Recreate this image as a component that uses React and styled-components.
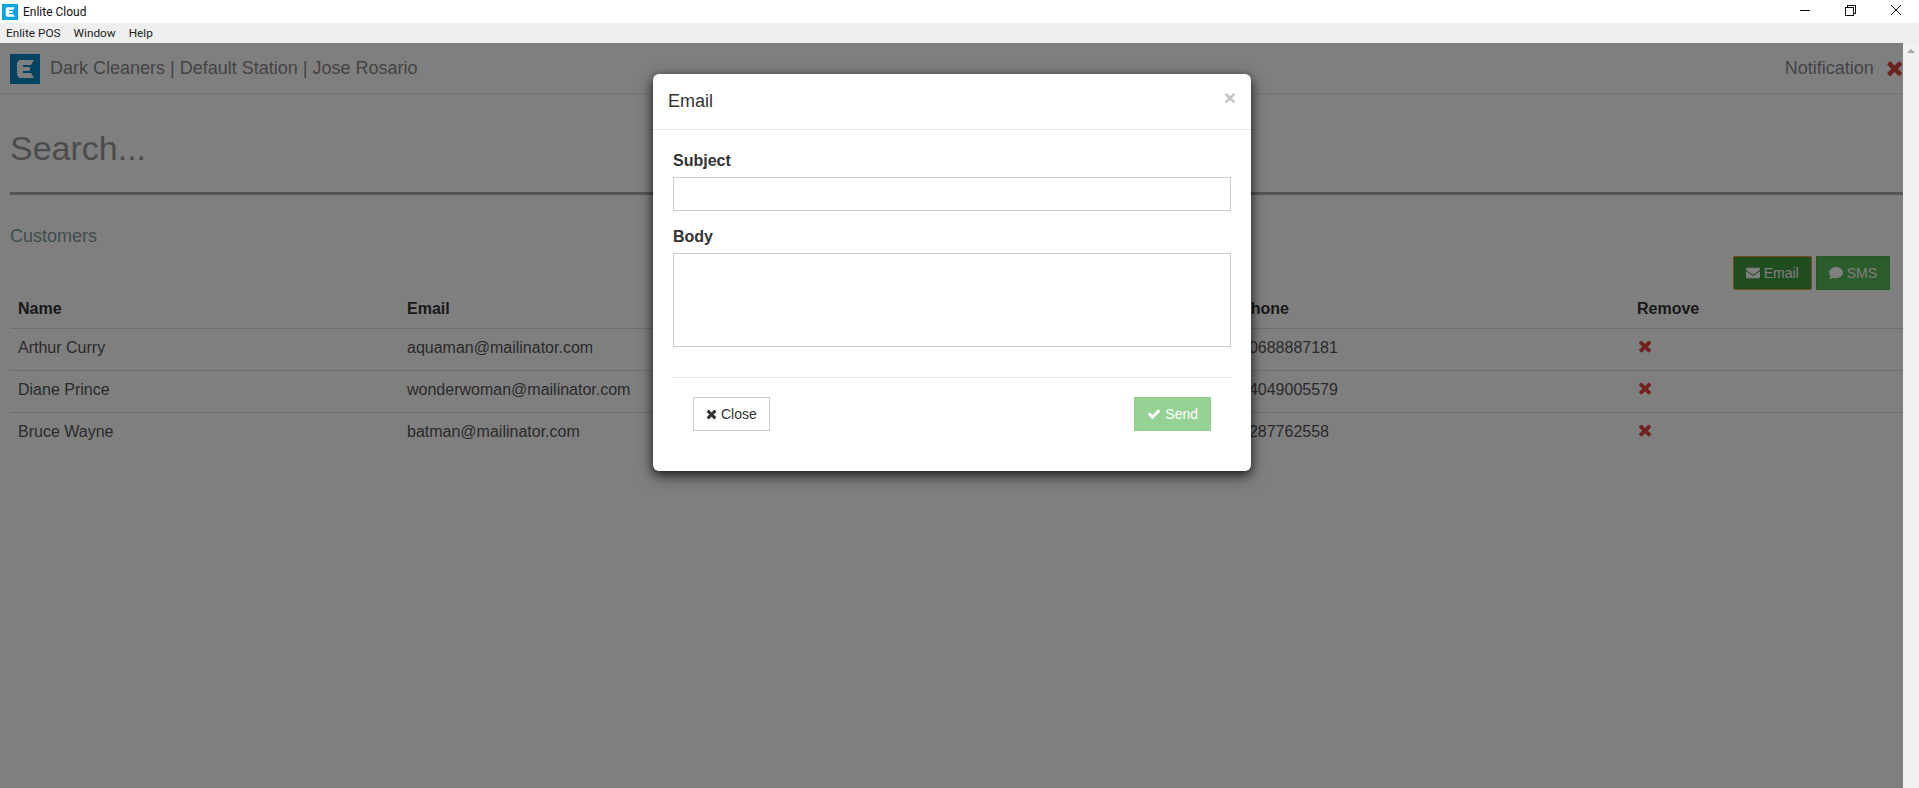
import React from "react";
import styled, { createGlobalStyle } from "styled-components";
import { FaEnvelope, FaComment } from "react-icons/fa";

const Global = createGlobalStyle`
  html, body { margin: 0; padding: 0; height: 100%; overflow: hidden; background: #fff; }
  * { box-sizing: border-box; }
  body { font-family: "Liberation Sans", Arial, sans-serif; color: #333; }
`;
const Win = styled.div`display: flex; flex-direction: column; width: 1919px; height: 788px; overflow: hidden;`;
const TitleBar = styled.div`
  height: 23px; flex: none; display: flex; align-items: center; background: #fff; padding-left: 2px;
  font-family: "Roboto", sans-serif; font-size: 12px; color: #111;
`;
const AppIcon = styled.svg`width: 16px; height: 16px; margin-right: 5px; flex: none;`;
const Controls = styled.div`margin-left: auto; display: flex; align-items: center; height: 23px; padding: 0 15px 4px 0; gap: 29px;`;
const ControlIcon = styled.svg`width: 16px; height: 16px; flex: none; display: block; fill: none; stroke: #111; stroke-width: 1; shape-rendering: ${p => (p.$smooth ? "auto" : "crispEdges")};`;
const CloseControl = styled(ControlIcon)`margin-left: 1px;`;
const MenuBar = styled.div`
  height: 20px; flex: none; display: flex; align-items: center; background: #efefef; padding-left: 6px; gap: 13px;
  font-family: "Roboto", sans-serif; font-size: 11.8px; color: #222;
`;
const Main = styled.div`flex: 1; display: flex; min-height: 0;`;
const Content = styled.div`position: relative; flex: 1; min-width: 0; overflow: hidden; background: #fff;`;
const Scrollbar = styled.div`width: 16px; flex: none; background: #f1f1f1; display: flex; justify-content: center; padding-top: 6px;`;
const ArrowUp = styled.div`width: 0; height: 0; border-left: 4px solid transparent; border-right: 4px solid transparent; border-bottom: 4px solid #a3a3a3;`;
const Header = styled.header`
  height: 51px; display: flex; align-items: center; border-bottom: 1px solid #e7e7e7; padding-left: 10px;
  font-size: 18px; color: #888; white-space: nowrap;
`;
const Logo = styled.svg`width: 30px; height: 30px; margin-right: 10px; flex: none; margin-top: 2px;`;
const Notification = styled.div`margin-left: auto; display: flex; align-items: center; gap: 12px;`;
const Glyph = styled.svg`display: block; flex: none; height: ${p => p.$size}px; width: auto; fill: currentColor; color: ${p => p.$color || "inherit"};`;
const SearchInput = styled.input`
  display: block; width: calc(100% - 10px); margin-left: 10px; height: 101px; padding: 34px 0 24px; border: 0; border-bottom: 3px solid #aaa;
  font: 34px/40px "Liberation Sans", Arial, sans-serif; outline: none; background: transparent;
  &::placeholder { color: #999; opacity: 1; }
`;
const SectionTitle = styled.h2`margin: 30px 0 0 10px; font-size: 18px; line-height: 22px; font-weight: 400; color: #7f9a9a;`;
const Actions = styled.div`display: flex; justify-content: flex-end; gap: 4px; padding-right: 13px; margin-top: 9px;`;
const ActionButton = styled.button`
  height: 34px; padding: 0 12px; display: inline-flex; align-items: center; gap: 4px; font: 14px "Liberation Sans", Arial, sans-serif; color: #fff;
  background: ${p => (p.$active ? "#3f9a3f" : "#56b856")};
  border: 1px solid ${p => (p.$active ? "#e09a2c" : "#50ac50")};
  border-radius: ${p => (p.$active ? "2px" : "0")};
`;
const Table = styled.table`width: calc(100% - 10px); margin-left: 10px; border-collapse: collapse; table-layout: fixed; font-size: 16px;`;
const Col = styled.col`width: ${p => p.$w}px;`;
const Th = styled.th`height: 38px; padding: 0 8px; text-align: left; font-weight: 700; border-bottom: 1px solid #ddd; color: #333;`;
const Td = styled.td`height: 42px; padding: 0 8px 3px; color: #555; border-bottom: 1px solid #ddd; white-space: nowrap;`;
const RemoveCell = styled(Td)`padding: 0 8px 7px 9px;`;
const Row = styled.tr`&:last-child td { border-bottom: 0; }`;
const Backdrop = styled.div`position: absolute; inset: 0; background: rgba(0,0,0,.5);`;
const Modal = styled.div`
  position: absolute; left: 653px; top: 31px; width: 598px; height: 397px; background: #fff; border-radius: 6px;
  box-shadow: 0 3px 9px rgba(0,0,0,.5), 0 5px 15px rgba(0,0,0,.5); display: flex; flex-direction: column;
`;
const ModalHeader = styled.div`height: 56px; flex: none; border-bottom: 1px solid #e5e5e5; display: flex; align-items: center; padding: 0 15px; position: relative;`;
const ModalTitle = styled.h3`margin: 0; font-size: 18px; font-weight: 400; color: #333;`;
const Dismiss = styled.span`position: absolute; right: 15px; top: 13px; font-size: 21px; line-height: 1; font-weight: 700; color: #c4c4c4;`;
const ModalBody = styled.div`padding: 20px 20px 0;`;
const Label = styled.label`display: block; font-size: 16px; line-height: 22px; font-weight: 700; color: #333; margin-bottom: 5px;`;
const Input = styled.input`display: block; width: 558px; height: 34px; border: 1px solid #ccc; margin-bottom: 15px; outline: none;`;
const Textarea = styled.textarea`display: block; width: 558px; height: 94px; border: 1px solid #ccc; outline: none; resize: none;`;
const Rule = styled.hr`margin: 30px 0 0; border: 0; border-top: 1px solid #e5e5e5;`;
const Footer = styled.div`display: flex; justify-content: space-between; padding: 19px 20px 0;`;
const ModalButton = styled.button`
  height: 34px; padding: 0 12px; display: inline-flex; align-items: center; gap: 4px; font: 14px "Liberation Sans", Arial, sans-serif;
  color: ${p => (p.$primary ? "#fff" : "#333")};
  background: ${p => (p.$primary ? "#97d295" : "#fff")};
  border: 1px solid ${p => (p.$primary ? "#8fd08d" : "#ccc")};
`;

const TimesIcon = ({ size, color }) => (
  <Glyph $size={size} $color={color} viewBox="0 0 1408 1792">
    <path d="M1298 1322q0 40-28 68l-136 136q-28 28-68 28t-68-28l-294-294-294 294q-28 28-68 28t-68-28l-136-136q-28-28-28-68t28-68l294-294-294-294q-28-28-28-68t28-68l136-136q28-28 68-28t68 28l294 294 294-294q28-28 68-28t68 28l136 136q28 28 28 68t-28 68l-294 294 294 294q28 28 28 68z" />
  </Glyph>
);
const CheckIcon = ({ size }) => (
  <Glyph $size={size} viewBox="0 0 1792 1792">
    <path d="M1671 566q0 40-28 68l-724 724-136 136q-28 28-68 28t-68-28l-136-136-362-362q-28-28-28-68t28-68l136-136q28-28 68-28t68 28l294 295 656-657q28-28 68-28t68 28l136 136q28 28 28 68z" />
  </Glyph>
);
const ELogo = ({ as: C, bg }) => (
  <C viewBox="0 0 30 30">
    <rect width="30" height="30" fill={bg} />
    <path d="M9 6H24L21 11H13V13H20V17H13V19H21L24 24H9L7 21V9Z" fill="#fff" />
  </C>
);
const rows = [
  ["Arthur Curry", "aquaman@mailinator.com", "10688887181"],
  ["Diane Prince", "wonderwoman@mailinator.com", "14049005579"],
  ["Bruce Wayne", "batman@mailinator.com", "1287762558"],
];
export default function App() {
  return (
    <Win>
      <Global />
      <TitleBar>
        <ELogo as={AppIcon} bg="#05a5e6" />
        Enlite Cloud
        <Controls>
          <ControlIcon viewBox="0 0 16 16"><path d="M3 8.5H13" /></ControlIcon>
          <ControlIcon viewBox="0 0 16 16"><path d="M3.5 5.5H11.5V13.5H3.5ZM5.5 5.5V3.5H13.5V11.5H11.5" /></ControlIcon>
          <CloseControl $smooth viewBox="0 0 16 16"><path d="M3 3L13 13M13 3L3 13" /></CloseControl>
        </Controls>
      </TitleBar>
      <MenuBar><span>Enlite POS</span><span>Window</span><span>Help</span></MenuBar>
      <Main>
        <Content>
          <Header>
            <ELogo as={Logo} bg="#0a86c4" />
            Dark Cleaners | Default Station | Jose Rosario
            <Notification>Notification <TimesIcon size={22} color="#d9443f" /></Notification>
          </Header>
          <SearchInput placeholder="Search..." readOnly />
          <SectionTitle>Customers</SectionTitle>
          <Actions>
            <ActionButton $active><FaEnvelope />Email</ActionButton>
            <ActionButton><FaComment />SMS</ActionButton>
          </Actions>
          <Table>
            <colgroup><Col $w={389} /><Col $w={833} /><Col $w={397} /><col /></colgroup>
            <thead><tr><Th>Name</Th><Th>Email</Th><Th>Phone</Th><Th>Remove</Th></tr></thead>
            <tbody>
              {rows.map(r => (
                <Row key={r[0]}><Td>{r[0]}</Td><Td>{r[1]}</Td><Td>{r[2]}</Td><RemoveCell><TimesIcon size={18} color="#e2443f" /></RemoveCell></Row>
              ))}
            </tbody>
          </Table>
          <Backdrop />
          <Modal>
            <ModalHeader>
              <ModalTitle>Email</ModalTitle>
              <Dismiss>×</Dismiss>
            </ModalHeader>
            <ModalBody>
              <Label>Subject</Label>
              <Input />
              <Label>Body</Label>
              <Textarea />
              <Rule />
              <Footer>
                <ModalButton><TimesIcon size={14} />Close</ModalButton>
                <ModalButton $primary><CheckIcon size={14} />Send</ModalButton>
              </Footer>
            </ModalBody>
          </Modal>
        </Content>
        <Scrollbar><ArrowUp /></Scrollbar>
      </Main>
    </Win>
  );
}
